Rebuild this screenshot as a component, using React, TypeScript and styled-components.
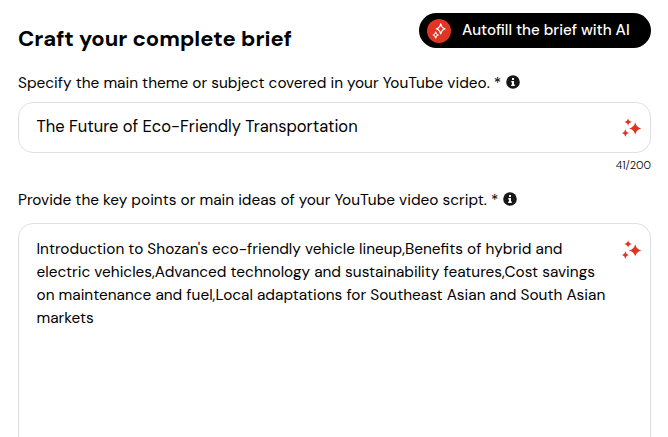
import React from "react";
import styled, { createGlobalStyle } from "styled-components";

const GlobalStyle = createGlobalStyle`
  * { box-sizing: border-box; }
  body {
    margin: 0;
    background: #fff;
    color: #000;
    font-family: "DM Sans", Inter, sans-serif;
    overflow: hidden;
  }
`;

const Page = styled.main`
  display: flex;
  flex-direction: column;
  height: 437px;
  padding: 13px 17px 0 18px;
  overflow: hidden;

  > * { flex: none; }
`;

const Header = styled.header`
  display: flex;
  justify-content: space-between;
  align-items: flex-start;
  height: 58px;
`;

const Title = styled.h1`
  margin: 10px 0 0;
  font-size: 22px;
  line-height: 32px;
  font-weight: 700;
  white-space: nowrap;
`;

const AutofillButton = styled.button`
  display: flex;
  align-items: center;
  gap: 11px;
  width: 232px;
  height: 35px;
  padding: 0 0 0 8px;
  border: 0;
  border-radius: 18px;
  background: #000;
  color: #fff;
  font: 500 15.2px/35px "DM Sans", Inter, sans-serif;
  white-space: nowrap;
`;

const Badge = styled.span`
  display: grid;
  place-items: center;
  flex: none;
  width: 24px;
  height: 24px;
  border-radius: 50%;
  background: #e03424;
`;

const Label = styled.label`
  display: flex;
  align-items: center;
  gap: 5px;
  height: 24px;
  font-size: 15.4px;
  white-space: nowrap;

  svg { margin-bottom: 2px; }
`;

const Field = styled.div<{ $height: number; $top: number; $iconTop: number }>`
  display: flex;
  justify-content: space-between;
  align-items: flex-start;
  flex: none;
  height: ${(p) => p.$height}px;
  padding: ${(p) => p.$top}px 8px 0 17.5px;
  border: 1px solid #e0e0e0;
  border-radius: 15px;

  > svg { margin-top: ${(p) => p.$iconTop}px; }
`;

const Value = styled.div<{ $size?: number }>`
  font-size: ${(p) => p.$size ?? 15.4}px;
  line-height: 23px;
  white-space: nowrap;
`;

const Counter = styled.div`
  height: 35px;
  padding-top: 5px;
  text-align: right;
  font-size: 11px;
  font-weight: 300;
  line-height: 15px;
`;

const Stack = styled.section<{ $gap: number }>`
  display: flex;
  flex-direction: column;
  gap: ${(p) => p.$gap}px;
`;

const lines = [
  "Introduction to Shozan's eco-friendly vehicle lineup,Benefits of hybrid and",
  "electric vehicles,Advanced technology and sustainability features,Cost savings",
  "on maintenance and fuel,Local adaptations for Southeast Asian and South Asian",
  "markets",
];

const Sparkles = () => (
  <svg width="20" height="20" viewBox="0 0 20 20" fill="#e03424">
    <path d="M13.2 4.2Q14.3 9.3 19.4 10.4Q14.3 11.5 13.2 16.6Q12.1 11.5 7 10.4Q12.1 9.3 13.2 4.2Z" />
    <path d="M6.1 .2Q6.7 3.4 9.9 4Q6.7 4.6 6.1 7.8Q5.5 4.6 2.3 4Q5.5 3.4 6.1 .2Z" />
    <path d="M3.4 11.2Q4 14.4 6.8 15Q4 15.6 3.4 18.8Q2.8 15.6 0 15Q2.8 14.4 3.4 11.2Z" />
  </svg>
);

const BadgeStars = () => (
  <svg width="16" height="18" viewBox="0 0 16 18" fill="none" stroke="#fff" strokeWidth="1.25" strokeLinejoin="round">
    <path d="M9.7 1.9Q10.6 5.9 14 6.9Q10.6 7.9 9.7 11.9Q8.8 7.9 5.4 6.9Q8.8 5.9 9.7 1.9Z" />
    <path d="M4.7 10Q5.2 12.5 7.2 13Q5.2 13.5 4.7 16Q4.2 13.5 2.2 13Q4.2 12.5 4.7 10Z" />
  </svg>
);

const Info = () => (
  <svg width="14" height="14" viewBox="0 0 14 14">
    <circle cx="7" cy="7" r="6.8" fill="#171717" />
    <path d="M6 3h2v2H6zM5.3 6H8v3.5h.8V11H5.2V9.5H6v-2h-.7z" fill="#fff" />
  </svg>
);

export default function App() {
  return (
    <>
      <GlobalStyle />
      <Page>
        <Header>
          <Title>Craft your complete brief</Title>
          <AutofillButton>
            <Badge><BadgeStars /></Badge>
            <span>Autofill the brief with AI</span>
          </AutofillButton>
        </Header>
        <Stack $gap={7}>
          <Label>
            <span>Specify the main theme or subject covered in your YouTube video. *</span>
            <Info />
          </Label>
          <Field $height={51} $top={12} $iconTop={3}>
            <Value $size={16.5}>The Future of Eco-Friendly Transportation</Value>
            <Sparkles />
          </Field>
        </Stack>
        <Counter>41/200</Counter>
        <Stack $gap={11}>
          <Label>
            <span>Provide the key points or main ideas of your YouTube video script. *</span>
            <Info />
          </Label>
          <Field $height={240} $top={14} $iconTop={2}>
            <Value>
              {lines.map((line) => <div key={line}>{line}</div>)}
            </Value>
            <Sparkles />
          </Field>
        </Stack>
      </Page>
    </>
  );
}
